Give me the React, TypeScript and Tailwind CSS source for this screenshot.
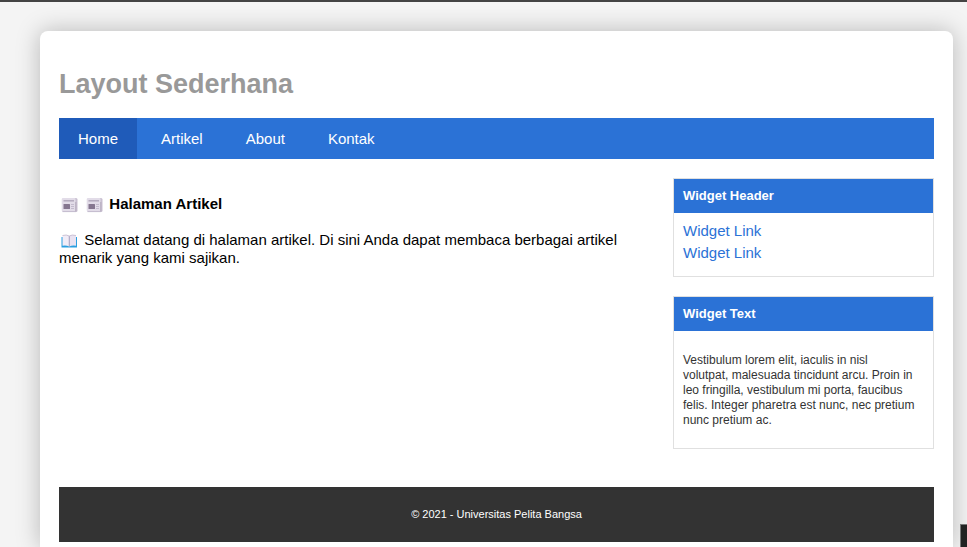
const navItems = ['Home', 'Artikel', 'About', 'Kontak'];

function NewspaperIcon() {
  return (
    <svg viewBox="0 0 21 16" className="inline-block h-4 w-[21px] align-[-4px]" aria-hidden="true">
      <path d="M5 1h12a1.500 1.500 0 0 1 1.500 1.500V13.500a1.500 1.500 0 0 1-1.500 1.500H5z" fill="#c9c0d1" />
      <path d="M4 1h11.500a1 1 0 0 1 1 1V15H4.500A1.800 1.800 0 0 1 2.700 13.200V2.300A1.300 1.300 0 0 1 4 1z" fill="#e2dce8" />
      <path d="M4.500 3.800h10.500" stroke="#b0a6ba" strokeWidth="1.400" />
      <rect x="4.500" y="7" width="6.500" height="5" rx="0.500" fill="#85768f" />
      <path d="M12 7.500h3M12 9.500h3M12 11.500h3" stroke="#c0b7c9" strokeWidth="0.900" />
      <path d="M16.800 5v9.500" stroke="#aca2b6" strokeWidth="0.800" />
      <path d="M3.500 14.600h13.500" stroke="#c0b7c9" strokeWidth="0.900" />
    </svg>
  );
}

function BookIcon() {
  return (
    <svg viewBox="0 0 21 16" className="inline-block h-4 w-[21px] align-[-4px]" aria-hidden="true">
      <path d="M2.500 4h15.500v10.500H2.500z" fill="#2a9fe0" />
      <path d="M3.500 2.500Q7.500 1.300 10.250 3V13.500Q7 12 3.500 12.800z" fill="#f1ecf7" />
      <path d="M17 2.500Q13 1.300 10.250 3V13.500Q13.500 12 17 12.800z" fill="#e9e2f1" />
      <path d="M10.250 3v10.500" stroke="#a99ab8" strokeWidth="0.900" />
      <path d="M3.500 2.500Q7.500 1.300 10.250 3Q13 1.300 17 2.500" fill="none" stroke="#b9adc6" strokeWidth="0.700" />
    </svg>
  );
}

export default function App() {
  return (
    <div className="relative min-h-screen overflow-hidden border-t-2 border-[#444] bg-[#f4f4f4] pt-[29px] pr-[14px] pl-10 font-['Liberation_Sans',Arial,sans-serif] text-[15px] leading-[17px] text-black">
      <div className="rounded-t-lg bg-white px-[19px] pt-[38px] pb-[5px] shadow-[0_0_23px_rgba(0,0,0,0.25)]">
        <header>
          <h1 className="text-[27px] leading-[30px] font-bold text-[#999]">Layout Sederhana</h1>
        </header>
        <nav className="mt-[19px] flex gap-[5px] bg-[#2b72d6]">
          {navItems.map((item, index) => (
            <a
              key={item}
              href="#"
              className={`px-[19px] py-3 text-white ${index === 0 ? 'bg-[#1f5bb9]' : ''}`}
            >
              {item}
            </a>
          ))}
        </nav>
        <div className="flex gap-5 pt-[19px]">
          <main className="min-w-0 flex-1 pt-[17px]">
            <h2 className="font-bold">
              <NewspaperIcon /> <NewspaperIcon /> Halaman Artikel
            </h2>
            <p className="mt-[18px]">
              <BookIcon /> Selamat datang di halaman artikel. Di sini Anda dapat membaca berbagai artikel menarik
              yang kami sajikan.
            </p>
          </main>
          <aside className="flex w-[261px] shrink-0 flex-col gap-[19px]">
            <section className="border border-[#e0e0e0]">
              <h3 className="bg-[#2b72d6] px-[9px] py-[9px] text-[13px] leading-4 font-bold text-white">Widget Header</h3>
              <ul className="px-[9px] pt-[7px] pb-[12px] leading-[22px] text-[#2b72d6]">
                <li><a href="#">Widget Link</a></li>
                <li><a href="#">Widget Link</a></li>
              </ul>
            </section>
            <section className="border border-[#e0e0e0]">
              <h3 className="bg-[#2b72d6] px-[9px] py-[9px] text-[13px] leading-4 font-bold text-white">Widget Text</h3>
              <p className="pt-[22px] pr-[18px] pb-[20px] pl-[9px] text-[12px] leading-[15px] text-[#333]">
                Vestibulum lorem elit, iaculis in nisl volutpat, malesuada tincidunt arcu. Proin in leo fringilla,
                vestibulum mi porta, faucibus felis. Integer pharetra est nunc, nec pretium nunc pretium ac.
              </p>
            </section>
          </aside>
        </div>
        <footer className="mt-[38px] bg-[#333] py-[19px] text-center text-[11px] text-white">
          © 2021 - Universitas Pelita Bangsa
        </footer>
      </div>
      <div className="absolute right-0 bottom-0 h-[23px] w-[7px] border-t border-l border-[#777] bg-[#222]" />
    </div>
  );
}
